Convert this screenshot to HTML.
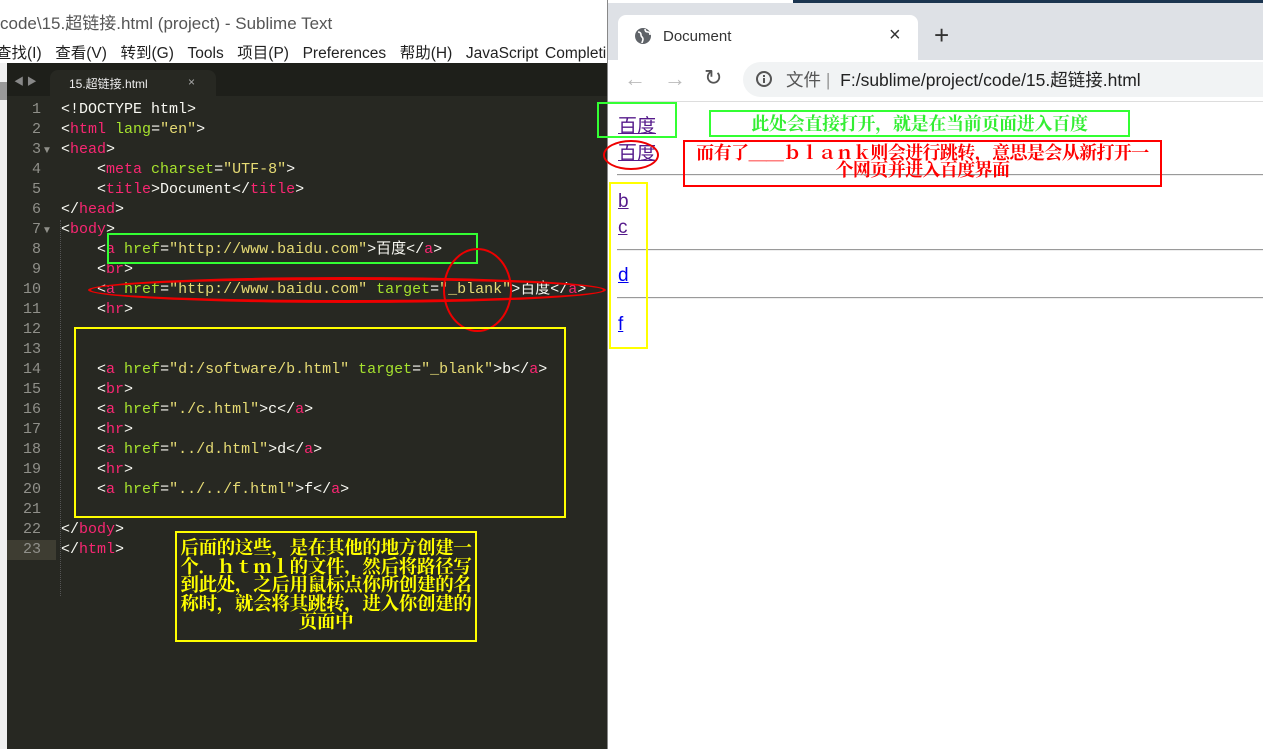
<!DOCTYPE html>
<html><head><meta charset="utf-8"><style>
*{margin:0;padding:0;box-sizing:border-box}
body{width:1263px;height:749px;position:relative;overflow:hidden;background:#272822;font-family:"Liberation Sans","Noto Sans CJK SC",sans-serif}
.a{position:absolute}
.code{position:absolute;left:0;font-family:"Liberation Mono","Noto Sans CJK SC",monospace;font-size:15px;color:#f8f8f2;white-space:pre;line-height:20px}
.ln{position:absolute;left:7px;width:34px;text-align:right;font-family:"Liberation Mono",monospace;font-size:15px;color:#90908a;line-height:20px}
.t{color:#f92672}.at{color:#a6e22e}.s{color:#e6db74}
.lk{position:absolute;left:618px;font-size:19px;text-decoration:underline;line-height:22px}
.hr{position:absolute;left:617px;right:0;height:2px;border-top:1px solid #9a9a9a;border-bottom:1px solid #eee}
.cn{font-family:'Noto Serif CJK SC',serif;font-weight:bold;text-align:center}
</style></head><body>
<div class="a" style="left:0;top:0;width:608px;height:63px;background:#fff"></div>
<div class="a" style="left:0;top:9px;font-size:17px;color:#555;white-space:nowrap">code\15.超链接.html (project) - Sublime Text</div>
<div class="a" style="left:-4px;top:41px;font-size:15.5px;color:#222;white-space:nowrap;word-spacing:2.5px">查找(I)&nbsp; 查看(V)&nbsp; 转到(G)&nbsp; Tools&nbsp; 项目(P)&nbsp; Preferences&nbsp; 帮助(H)&nbsp; JavaScript&nbsp;Completi</div>
<div class="a" style="left:0;top:63px;width:7px;height:686px;background:#f0f0f0"></div>
<div class="a" style="left:0;top:82px;width:7px;height:18px;background:#999"></div>
<div class="a" style="left:7px;top:63px;width:601px;height:33px;background:#1e1f1a"></div>
<div class="a" style="left:14px;top:73px;color:#888;font-size:10px">◀ ▶</div>
<div class="a" style="left:50px;top:70px;width:166px;height:26px;background:#272822;border-radius:8px 8px 0 0"></div>
<div class="a" style="left:69px;top:75px;color:#eee;font-size:12px">15.超链接.html</div>
<div class="a" style="left:188px;top:75px;color:#aaa;font-size:12px">×</div>
<div class="a" style="left:7px;top:540px;width:49px;height:20px;background:#3e3d32"></div>
<div class="a" style="left:60px;top:220px;height:376px;border-left:1px dotted #555"></div>
<div class="ln" style="top:100px;">1<br>2<br>3<br>4<br>5<br>6<br>7<br>8<br>9<br>10<br>11<br>12<br>13<br>14<br>15<br>16<br>17<br>18<br>19<br>20<br>21<br>22<br>23</div>
<div class="a" style="left:42px;top:145px;color:#90908a;font-size:10px">▼</div>
<div class="a" style="left:42px;top:225px;color:#90908a;font-size:10px">▼</div>
<div class="code" style="left:61px;top:100px">&lt;!DOCTYPE html&gt;
&lt;<span class="t">html</span> <span class="at">lang</span>=<span class="s">"en"</span>&gt;
&lt;<span class="t">head</span>&gt;
    &lt;<span class="t">meta</span> <span class="at">charset</span>=<span class="s">"UTF-8"</span>&gt;
    &lt;<span class="t">title</span>&gt;Document&lt;/<span class="t">title</span>&gt;
&lt;/<span class="t">head</span>&gt;
&lt;<span class="t">body</span>&gt;
    &lt;<span class="t">a</span> <span class="at">href</span>=<span class="s">"http://www.baidu.com"</span>&gt;百度&lt;/<span class="t">a</span>&gt;
    &lt;<span class="t">br</span>&gt;
    &lt;<span class="t">a</span> <span class="at">href</span>=<span class="s">"http://www.baidu.com"</span> <span class="at">target</span>=<span class="s">"_blank"</span>&gt;百度&lt;/<span class="t">a</span>&gt;
    &lt;<span class="t">hr</span>&gt;


    &lt;<span class="t">a</span> <span class="at">href</span>=<span class="s">"d:/software/b.html"</span> <span class="at">target</span>=<span class="s">"_blank"</span>&gt;b&lt;/<span class="t">a</span>&gt;
    &lt;<span class="t">br</span>&gt;
    &lt;<span class="t">a</span> <span class="at">href</span>=<span class="s">"./c.html"</span>&gt;c&lt;/<span class="t">a</span>&gt;
    &lt;<span class="t">hr</span>&gt;
    &lt;<span class="t">a</span> <span class="at">href</span>=<span class="s">"../d.html"</span>&gt;d&lt;/<span class="t">a</span>&gt;
    &lt;<span class="t">hr</span>&gt;
    &lt;<span class="t">a</span> <span class="at">href</span>=<span class="s">"../../f.html"</span>&gt;f&lt;/<span class="t">a</span>&gt;

&lt;/<span class="t">body</span>&gt;
&lt;/<span class="t">html</span>&gt;</div>
<div class="a" style="left:107px;top:233px;width:371px;height:31px;border:2px solid #3f3"></div>
<div class="a" style="left:88px;top:277px;width:518px;height:26px;border:3px solid #e00;border-radius:50%"></div>
<div class="a" style="left:443px;top:248px;width:69px;height:84px;border:2px solid #e00;border-radius:50%"></div>
<div class="a" style="left:74px;top:327px;width:492px;height:191px;border:2px solid #ff0"></div>
<div class="a cn" style="left:175px;top:531px;width:302px;height:111px;border:2px solid #ff0;color:#ff0;font-size:18.5px;line-height:18.5px;padding:5px 0 0;letter-spacing:-0.3px">后面的这些，是在其他的地方创建一个．ｈｔｍｌ的文件，然后将路径写到此处，之后用鼠标点你所创建的名称时，就会将其跳转，进入你创建的页面中</div>
<div class="a" style="left:607px;top:0;width:656px;height:749px;background:#fff;border-left:1px solid #888"></div>
<div class="a" style="left:793px;top:0;width:470px;height:3px;background:#1b3550"></div>
<div class="a" style="left:608px;top:3px;width:655px;height:57px;background:#dee1e6"></div>
<div class="a" style="left:618px;top:15px;width:300px;height:45px;background:#fff;border-radius:8px 8px 0 0"></div>
<svg class="a" style="left:634px;top:27px" width="18" height="18" viewBox="0 0 18 18"><circle cx="9" cy="9" r="8" fill="#5f6368"/><path d="M4 5c2 0 3 1 3 3s2 2 2 4-1 3-1 4M11 2c0 2 1 3 3 3s2 2 2 3" stroke="#fff" stroke-width="1.6" fill="none"/></svg>
<div class="a" style="left:663px;top:28px;font-size:15px;color:#333">Document</div>
<div class="a" style="left:889px;top:24px;font-size:20px;color:#333">×</div>
<div class="a" style="left:934px;top:20px;font-size:26px;color:#333;font-weight:300">+</div>
<div class="a" style="left:608px;top:60px;width:655px;height:42px;background:#fff;border-bottom:1px solid #ddd"></div>
<div class="a" style="left:624px;top:66px;font-size:22px;color:#bbb">←</div>
<div class="a" style="left:664px;top:66px;font-size:22px;color:#bbb">→</div>
<div class="a" style="left:704px;top:65px;font-size:22px;color:#555">↻</div>
<div class="a" style="left:743px;top:62px;width:540px;height:35px;background:#f1f3f4;border-radius:18px"></div>
<svg class="a" style="left:755px;top:70px" width="18" height="18"><circle cx="9" cy="9" r="7" fill="none" stroke="#555" stroke-width="2"/><rect x="8" y="8" width="2" height="5" fill="#555"/><rect x="8" y="5" width="2" height="2" fill="#555"/></svg>
<div class="a" style="left:786px;top:67px;font-size:17.5px;color:#555;white-space:nowrap">文件 <span style="color:#999">|</span>&nbsp; <span style="color:#222">F:/sublime/project/code/15.超链接.html</span></div>
<div class="lk" style="top:116px;color:#551a8b">百度</div>
<div class="lk" style="top:143px;color:#551a8b">百度</div>
<div class="hr" style="top:174px"></div>
<div class="lk" style="top:191px;color:#551a8b">b</div>
<div class="lk" style="top:217px;color:#551a8b">c</div>
<div class="hr" style="top:249px"></div>
<div class="lk" style="top:265px;color:#00e">d</div>
<div class="hr" style="top:297px"></div>
<div class="lk" style="top:314px;color:#00e">f</div>
<div class="a" style="left:597px;top:102px;width:80px;height:36px;border:2px solid #3f3"></div>
<div class="a cn" style="left:709px;top:110px;width:421px;height:27px;border:2px solid #3f3;color:#3e3;font-size:18px;line-height:22px;letter-spacing:-0.3px">此处会直接打开，就是在当前页面进入百度</div>
<div class="a" style="left:603px;top:140px;width:56px;height:30px;border:2px solid #e00;border-radius:50%"></div>
<div class="a cn" style="left:683px;top:140px;width:479px;height:47px;border:2px solid #f00;color:#f00;font-size:18px;line-height:17px;padding:2px 8px 0;letter-spacing:-0.6px">而有了＿＿ｂｌａｎｋ则会进行跳转，意思是会从新打开一个网页并进入百度界面</div>
<div class="a" style="left:609px;top:182px;width:39px;height:167px;border:2px solid #ff0"></div>
</body></html>
